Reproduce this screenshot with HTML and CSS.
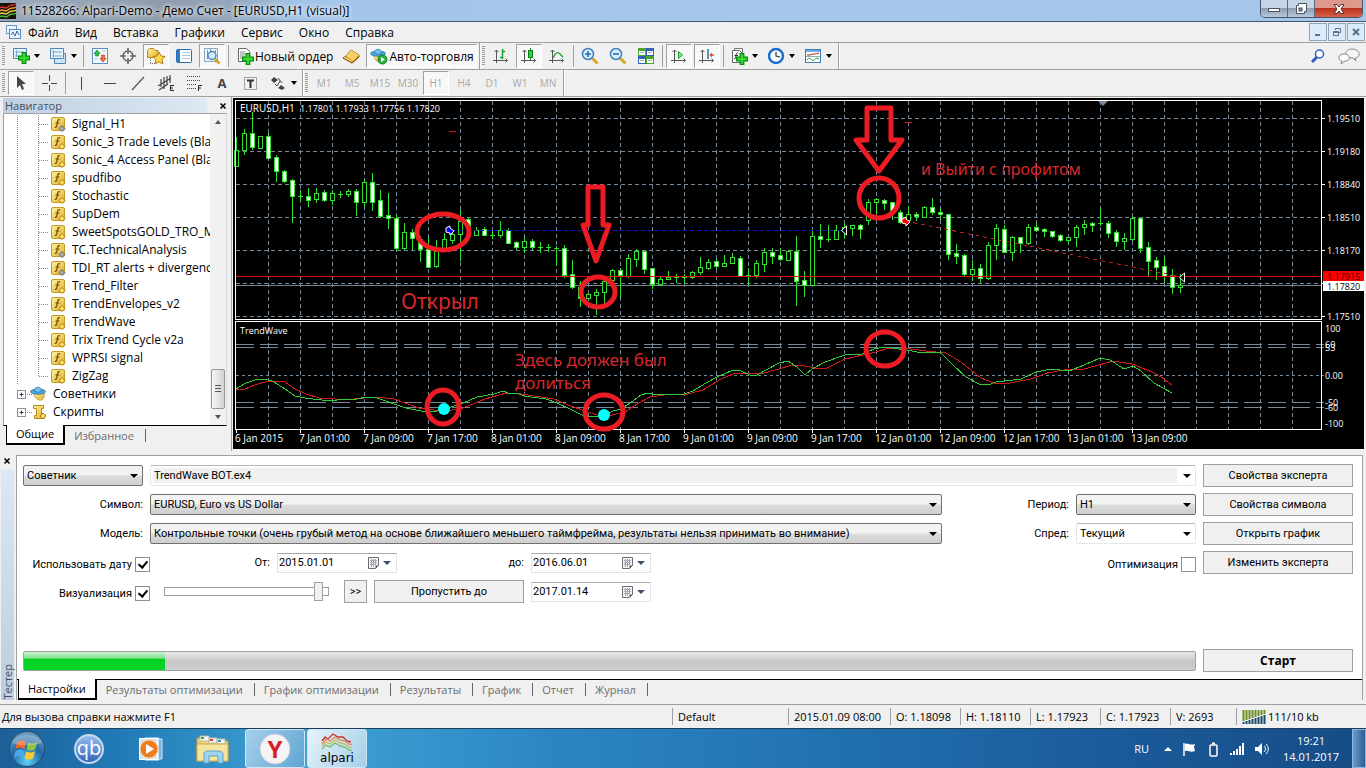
FILE: index.html
```html
<!DOCTYPE html>
<html lang="ru">
<head>
<meta charset="utf-8">
<title>11528266: Alpari-Demo - Демо Счет - [EURUSD,H1 (visual)]</title>
<link rel="stylesheet" href="styles.css">
</head>
<body>
<svg class="defs" width="0" height="0" aria-hidden="true">
  <defs>
    <linearGradient id="gold" x1="0" y1="0" x2="1" y2="1"><stop offset="0" stop-color="#fff3a0"/><stop offset="1" stop-color="#e0ac28"/></linearGradient>
    <linearGradient id="sky" x1="0" y1="0" x2="0" y2="1"><stop offset="0" stop-color="#dff1fc"/><stop offset="1" stop-color="#7fb9e6"/></linearGradient>
    <radialGradient id="orb" cx=".5" cy=".85" r=".9"><stop offset="0" stop-color="#5fd0f5"/><stop offset=".5" stop-color="#1d6aa8"/><stop offset="1" stop-color="#7fa8c4"/></radialGradient>
    <linearGradient id="qbg" x1="0" y1="0" x2="0" y2="1"><stop offset="0" stop-color="#9cc0ee"/><stop offset="1" stop-color="#2f63b8"/></linearGradient>
    <symbol id="fx" viewBox="0 0 16 16"><rect x="1.500" y="1.500" width="13" height="13" rx="1.500" fill="url(#gold)" stroke="#c49a2a"/><path d="M10 4c-2-1-2.300.5-2.600 2.500S6.800 12 4.800 11.200M5.500 7h4" fill="none" stroke="#6b4c08" stroke-width="1.200"/><path d="M12 9.500l3 3-3 3-3-3z" fill="#ffdf5a" stroke="#a97a10"/></symbol>
    <symbol id="fxg" viewBox="0 0 16 16"><rect x="1.500" y="1.500" width="13" height="13" rx="1.500" fill="url(#gold)" stroke="#c49a2a"/><path d="M10 4c-2-1-2.300.5-2.600 2.500S6.800 12 4.800 11.200M5.500 7h4" fill="none" stroke="#6b4c08" stroke-width="1.200"/><path d="M12 9.500l3 3-3 3-3-3z" fill="#aaa" stroke="#666"/></symbol>
    <symbol id="plus" viewBox="0 0 10 10"><path d="M3.500.5h3v3h3v3h-3v3h-3v-3h-3v-3h3z" fill="#35dc2c" stroke="#0a8a12"/></symbol>
    <symbol id="hat" viewBox="0 0 18 18"><path d="M4 8c0 5 3 7 6 8s6-3 5-7z" fill="url(#gold)" stroke="#b58a1c" stroke-width=".7"/><ellipse cx="8.500" cy="7" rx="8" ry="2.800" fill="#4fa9de" stroke="#21719f" stroke-width=".8"/><path d="M4.500 6.500C5 1 12 1 12.500 6.500 10 8 7 8 4.500 6.500z" fill="#6fc1ee" stroke="#21719f" stroke-width=".8"/></symbol>
    <symbol id="axes" viewBox="0 0 18 18"><path d="M4.500 3v13M1 13.500h14M2.500 5l2-2 2 2M13.500 11.500l2 2-2 2" fill="none" stroke="#555"/></symbol>
    <symbol id="cal" viewBox="0 0 14 14"><path d="M1.500 1.500h10v8l-3 3h-7z" fill="#f4f4f4" stroke="#6a6f78"/><path d="M3 4.500h7M3 6.500h7M3 8.500h5M4.500 3v8M6.500 3v8M8.500 3v6" stroke="#a3a8b3"/><path d="M11.500 9.500h-3v3z" fill="#555"/></symbol>
  </defs>
</svg>

<header class="titlebar">
  <svg class="applogo" width="16" height="16"><rect width="16" height="16" fill="#1a1208"/><path d="M0 5c3-3 5 2 8-1s5-1 8-3" fill="none" stroke="#d33" stroke-width="1.500"/><path d="M0 8c3-3 5 2 8-1s5-1 8-3" fill="none" stroke="#e8a030" stroke-width="1.500"/><path d="M0 11c3-3 5 2 8-1s5-1 8-3" fill="none" stroke="#e0d840" stroke-width="1.500"/><path d="M0 14c3-3 5 2 8-1s5-1 8-3" fill="none" stroke="#4b4" stroke-width="1.500"/></svg>
  <h1 class="title">11528266: Alpari-Demo - Демо Счет - [EURUSD,H1 (visual)]</h1>
  <div class="winbtns">
    <button class="wb" aria-label="Свернуть"><svg width="14" height="14"><rect x="1.500" y="6.500" width="11" height="3" fill="#fff" stroke="#4a5360"/></svg></button>
    <button class="wb" aria-label="Развернуть"><svg width="14" height="14"><path d="M4.500 1.500h8v8h-2v2h-8v-8h2z" fill="#fff" stroke="#4a5360"/><rect x="5" y="6" width="3" height="3" fill="#889" stroke="#4a5360"/></svg></button>
    <button class="wb close" aria-label="Закрыть"><svg width="14" height="14"><path d="M2 2.500h3l2 2.500 2-2.500h3L9 7l3 4.500H9L7 9l-2 2.500H2L5 7z" fill="#fff" stroke="#5a2a2a"/></svg></button>
  </div>
</header>

<nav class="menubar">
  <svg width="16" height="16"><rect x="1.500" y="1.500" width="10" height="8" fill="#eaf4fc" stroke="#6a9bc4"/><rect x="4.500" y="5.500" width="11" height="9" fill="#eaf4fc" stroke="#5a8ebc"/><path d="M6 11l2-3 2 4 2-5 2 4" fill="none" stroke="#3a6ea5"/></svg>
  <a href="#">Файл</a><a href="#">Вид</a><a href="#">Вставка</a><a href="#">Графики</a><a href="#">Сервис</a><a href="#">Окно</a><a href="#">Справка</a>
  <div class="mdi">
    <button aria-label="Свернуть окно"><svg width="10" height="10"><path d="M2 8h5" stroke="#5c7488" stroke-width="2"/></svg></button>
    <button aria-label="Восстановить окно"><svg width="10" height="10"><path d="M3.500 3V1.500h5v4H7M1.500 4.500h5v4h-5zM1.500 5.500h5" fill="none" stroke="#5c7488"/></svg></button>
    <button aria-label="Закрыть окно"><svg width="10" height="10"><path d="M2 2l6 6M8 2L2 8" stroke="#5c7488" stroke-width="2"/></svg></button>
  </div>
</nav>

<div class="toolrow">
  <div class="bar">
    <i class="grip"></i>
    <button class="tb drop" aria-label="Новый график"><svg width="18" height="18"><path d="M1.500 1.500h13v10h-13z" fill="#e8f4fd" stroke="#4c86b8"/><path d="M3 5h9M3 9h5M4.500 3v7" stroke="#7aa7cc"/><use href="#plus" x="6" y="5" width="12" height="12"/></svg></button>
    <button class="tb drop" aria-label="Профили"><svg width="18" height="18"><path d="M5.500 6.500h11v10h-11z" fill="#cfe4f5" stroke="#4c86b8"/><path d="M1.500 1.500h13v10h-13z" fill="#e8f4fd" stroke="#4c86b8"/><path d="M3 5h10M3 9h10M4.500 3v7" stroke="#7aa7cc"/></svg></button>
    <i class="sep"></i>
    <button class="tb" aria-label="Обзор рынка"><svg width="18" height="18"><rect x="1.500" y="1.500" width="15" height="15" fill="#f2f9fe" stroke="#5b93c4"/><path d="M6 3l3 3.500H7.500V9h-3V6.500H3z" fill="#2fbf3a" stroke="#0b7d1c" stroke-width=".6"/><path d="M12 15l3-3.500h-1.500V8h-3v3.500H9z" fill="#f2703c" stroke="#a83210" stroke-width=".6"/><path d="M11 4h4M3 12h4" stroke="#b8c8d8"/></svg></button>
    <button class="tb" aria-label="Перекрестие"><svg width="18" height="18"><circle cx="9" cy="9" r="5" fill="none" stroke="#666" stroke-width="1.500"/><path d="M9 1v6M9 11v6M1 9h6M11 9h6" stroke="#666" stroke-width="1.500"/></svg></button>
    <button class="tb on" aria-label="Навигатор"><svg width="20" height="18"><path d="M1.500 3.500l2-2h4l1.500 2h3v7h-10.500z" fill="url(#gold)" stroke="#b58a1c"/><path d="M4.500 11v6M4 16.500h5" stroke="#777" stroke-dasharray="1 1"/><path d="M13 5l2 4 4 .5-3 3 1 4.500-4-2.200L9 17l1-4.500-3-3 4-.5z" fill="#ffdb4a" stroke="#b07c10"/></svg></button>
    <button class="tb" aria-label="Терминал"><svg width="18" height="18"><rect x="1.500" y="2.500" width="15" height="13" rx="1" fill="#fff" stroke="#2a6cb0"/><path d="M2 3h3v12H2z" fill="#2f7acb"/><path d="M7 5.500h8M7 8.500h8M7 11.500h8" stroke="#a8c8e8"/></svg></button>
    <button class="tb on" aria-label="Тестер стратегий"><svg width="18" height="18"><rect x="1.500" y="1.500" width="13" height="13" fill="#eef6fc" stroke="#86a9c6"/><path d="M4.500 3v9M7.500 2v7M12.500 3v9" stroke="#7f95a8"/><circle cx="9" cy="8.500" r="4" fill="#cfe8fa" fill-opacity=".8" stroke="#4a88c0" stroke-width="1.400"/><path d="M12 12l4.500 4.500" stroke="#d8a020" stroke-width="2.500"/></svg></button>
    <i class="sep"></i>
    <button class="tb wide"><svg width="18" height="18"><path d="M2.500 1.500h8l3 3v10h-11z" fill="#fff" stroke="#666"/><path d="M4 5h5M4 7h7M4 9h5M4 11h4" stroke="#888"/><use href="#plus" x="6" y="6" width="12" height="12"/></svg>Новый ордер</button>
    <button class="tb" aria-label="MetaEditor"><svg width="18" height="18"><path d="M1 11l3-2 5-6 8 5v2l-7 6z" fill="#d9981f" stroke="#8a5a0c"/><path d="M4 9l5-6 8 5-6 6z" fill="#f6d06a"/><path d="M1 11l9 5 7-6" fill="none" stroke="#8a5a0c"/><path d="M2 10.500l8 4" stroke="#fff0b0"/></svg></button>
    <button class="tb wide on"><svg width="18" height="18"><use href="#hat" width="17" height="17"/><circle cx="12.500" cy="12.500" r="4.500" fill="#25b03a" stroke="#0b7d1c"/><path d="M11 10l4 2.500-4 2.500z" fill="#fff"/></svg>Авто-торговля</button>
  </div>
  <div class="bar">
    <i class="grip"></i>
    <button class="tb" aria-label="Бары"><svg width="18" height="18"><use href="#axes" width="18" height="18"/><path d="M10.500 2v10M8 10.500h2.500M10.500 4.500H13" fill="none" stroke="#16a32a" stroke-width="1.500"/></svg></button>
    <button class="tb on" aria-label="Японские свечи"><svg width="18" height="18"><use href="#axes" width="18" height="18"/><path d="M10.500 1v12" stroke="#0b7d1c"/><rect x="8.500" y="3.500" width="4" height="7" fill="#2bd13c" stroke="#0b7d1c"/></svg></button>
    <button class="tb" aria-label="Линия"><svg width="18" height="18"><use href="#axes" width="18" height="18"/><path d="M5 11c2-5 5-7 7-4l3 3" fill="none" stroke="#16a32a" stroke-width="1.300"/></svg></button>
    <i class="sep"></i>
    <button class="tb" aria-label="Увеличить"><svg width="18" height="18"><path d="M11 11l5.500 5.500" stroke="#d8a828" stroke-width="3"/><circle cx="7" cy="7" r="5.500" fill="#d8effc" stroke="#3a80c4" stroke-width="1.500"/><path d="M4 7h6M7 4v6" stroke="#2a6cb0" stroke-width="1.600"/></svg></button>
    <button class="tb" aria-label="Уменьшить"><svg width="18" height="18"><path d="M11 11l5.500 5.500" stroke="#d8a828" stroke-width="3"/><circle cx="7" cy="7" r="5.500" fill="#d8effc" stroke="#3a80c4" stroke-width="1.500"/><path d="M4 7h6" stroke="#2a6cb0" stroke-width="1.600"/></svg></button>
    <button class="tb" aria-label="Расположить окна"><svg width="18" height="18"><path d="M1 1h8v8H1zM9 9h8v8H9z" fill="#4aa52a"/><path d="M9 1h8v8H9zM1 9h8v8H1z" fill="#2f62b8"/><path d="M2 4h6v4H2zM10 4h6v4h-6zM2 12h6v4H2zM10 12h6v4h-6z" fill="#fff"/><path d="M3 5.500h4M11 5.500h4M3 13.500h4M11 13.500h4" stroke="#9bb"/></svg></button>
    <i class="sep"></i>
    <button class="tb on" aria-label="Автопрокрутка"><svg width="18" height="18"><use href="#axes" width="18" height="18"/><path d="M8.500 4.500v7l4-3.500z" fill="#8ee08e" stroke="#16a32a"/></svg></button>
    <button class="tb on" aria-label="Сдвиг графика"><svg width="18" height="18"><use href="#axes" width="18" height="18"/><path d="M10 2v10" stroke="#2a6cb0" stroke-width="1.500"/><path d="M12 8h4" stroke="#d8501c" stroke-width="1.500"/><path d="M11.500 8l2.500-2.500v5z" fill="#d8501c"/></svg></button>
    <i class="sep"></i>
    <button class="tb drop" aria-label="Индикаторы"><svg width="18" height="18"><path d="M4.500 1.500h8v11h-8z" fill="#fff" stroke="#777"/><path d="M2.500 3.500h7l2 2v10h-9z" fill="#fff" stroke="#666"/><path d="M8 6C5 5 7 12 4 12M4.500 8.500H8" fill="none" stroke="#333"/><use href="#plus" x="6" y="6" width="12" height="12"/></svg></button>
    <button class="tb drop" aria-label="Периоды"><svg width="18" height="18"><circle cx="9" cy="9" r="7" fill="#f4faff" stroke="#1f6fca" stroke-width="2.500"/><path d="M9 5v4l4 1" fill="none" stroke="#333" stroke-width="1.200"/></svg></button>
    <button class="tb drop" aria-label="Шаблоны"><svg width="18" height="18"><rect x="1.500" y="2.500" width="15" height="13" fill="#fff" stroke="#3a7ab8"/><path d="M2 4h14" stroke="#6fabe0" stroke-width="2"/><path d="M3 8h3l3-1h3l3-1" fill="none" stroke="#a03020"/><path d="M3 13c2-3 3-2 5 0s4-4 7-1" fill="none" stroke="#16a32a"/><path d="M2 9.500h14" stroke="#9ab"/></svg></button>
  </div>
  <div class="toolright">
    <button aria-label="Поиск"><svg width="16" height="16"><path d="M7 9l-5 5" stroke="#2b5fd0" stroke-width="3"/><circle cx="9.500" cy="6" r="4" fill="#fff" stroke="#2b5fd0" stroke-width="1.500"/></svg></button>
    <button aria-label="Сообщения"><svg width="22" height="18"><path d="M14 2c9 0 9 9 3 9l1 3-3-3C5 11 6 2 14 2z" fill="#f4f4f4" stroke="#888"/><path d="M6 7c7 0 7 7 1 7l-4 3 1-3C-1 13 0 7 6 7z" fill="#fafafa" stroke="#888"/></svg></button>
  </div>
</div>

<div class="toolrow">
  <div class="bar">
    <i class="grip"></i>
    <button class="tb on" aria-label="Курсор"><svg width="18" height="18"><path d="M5 2v12l3-3 2 5 2-1-2-5h4z" fill="#444"/></svg></button>
    <button class="tb" aria-label="Перекрестие курсора"><svg width="18" height="18"><path d="M9.500 1v6M9.500 11v6M2 9.500h6M11 9.500h6" stroke="#444"/></svg></button>
    <i class="sep"></i>
    <button class="tb" aria-label="Вертикальная линия"><svg width="18" height="18"><path d="M8.500 3v13" stroke="#444"/></svg></button>
    <button class="tb" aria-label="Горизонтальная линия"><svg width="18" height="18"><path d="M3 9.500h12" stroke="#444"/></svg></button>
    <button class="tb" aria-label="Трендовая линия"><svg width="18" height="18"><path d="M3 16L15 3" stroke="#555" stroke-width="1.200"/></svg></button>
    <button class="tb" aria-label="Канал"><svg width="18" height="18"><path d="M1 12L14 4M2 16l9-6M4 5v8M7 3v12M10 2v9M13 1v8" stroke="#444" stroke-width="1.200"/><path d="M17 11.500h-3.500v5H17M13.500 14H16" fill="none" stroke="#222"/></svg></button>
    <button class="tb" aria-label="Фибоначчи"><svg width="18" height="18"><path d="M2 2.500h14M2 6.500h14M2 10.500h9M2 14.500h9" stroke="#444" stroke-dasharray="1 1"/><path d="M13.500 17v-5.500H17M13.500 14H16" fill="none" stroke="#222"/></svg></button>
    <button class="tb glyph" aria-label="Текст">A</button>
    <button class="tb" aria-label="Метка"><svg width="18" height="18"><rect x="3.500" y="3.500" width="12" height="12" fill="none" stroke="#555" stroke-dasharray="1 1"/><path d="M6 6.500h7M9.500 6.500V14" stroke="#333" stroke-width="2"/></svg></button>
    <button class="tb drop" aria-label="Фигуры"><svg width="18" height="18"><path d="M5 3l4 3-4 3-3-3zM12 11l4 3-3 2-4-2z" fill="#444"/><path d="M6 10l2 2 3-5M9 4l4 5" fill="none" stroke="#444"/></svg></button>
  </div>
  <div class="bar periods">
    <i class="grip"></i>
    <button class="tb">M1</button><button class="tb">M5</button><button class="tb">M15</button><button class="tb">M30</button><button class="tb on">H1</button><button class="tb">H4</button><button class="tb">D1</button><button class="tb">W1</button><button class="tb">MN</button>
  </div>
</div>

<main class="work">
  <aside class="navigator">
    <div class="navhead"><h2>Навигатор</h2><button aria-label="Закрыть навигатор"><svg width="8" height="8"><path d="M1.500 1.500l5 5M6.500 1.500l-5 5" stroke="#000" stroke-width="1.500"/></svg></button></div>
    <div class="navbody">
      <ul class="tree" id="tree"></ul>
      <div class="scroll"><i class="up"></i><i class="thumb"></i><i class="down"></i></div>
    </div>
    <div class="tabs navtabs"><button class="tab active">Общие</button><button class="tab">Избранное</button></div>
  </aside>
  <section class="chart"><svg id="chart" viewBox="232 97 1134 354" role="img" aria-label="EURUSD,H1"></svg></section>
</main>

<section class="tester">
  <div class="side"><button aria-label="Закрыть тестер"><svg width="8" height="8"><path d="M1.500 1.500l5 5M6.500 1.500l-5 5" stroke="#000" stroke-width="1.500"/></svg></button><div class="sidename"><span>Тестер</span></div></div>
  <div class="panel">
    <form class="form">
      <div class="fields">
        <div class="row">
          <span class="sel short"><select aria-label="Тип"><option>Советник</option></select></span>
          <span class="sel flat grow file"><select aria-label="Файл эксперта"><option>TrendWave BOT.ex4</option></select></span>
        </div>
        <div class="row">
          <label class="lab" for="symbol">Символ:</label>
          <span class="sel grow"><select id="symbol"><option>EURUSD, Euro vs US Dollar</option></select></span>
          <label class="lab" for="period">Период:</label>
          <span class="sel short"><select id="period"><option>H1</option></select></span>
        </div>
        <div class="row">
          <label class="lab" for="model">Модель:</label>
          <span class="sel grow"><select id="model"><option>Контрольные точки (очень грубый метод на основе ближайшего меньшего таймфрейма, результаты нельзя принимать во внимание)</option></select></span>
          <label class="lab" for="spread">Спред:</label>
          <span class="sel flat short"><select id="spread"><option>Текущий</option></select></span>
        </div>
        <div class="row">
          <label class="check">Использовать дату<input type="checkbox" checked></label>
          <label class="lab" for="from">От:</label>
          <span class="date"><input id="from" type="text" value="2015.01.01"><svg width="14" height="14"><use href="#cal" width="14" height="14"/></svg><i></i></span>
          <label class="lab" for="to">до:</label>
          <span class="date"><input id="to" type="text" value="2016.06.01"><svg width="14" height="14"><use href="#cal" width="14" height="14"/></svg><i></i></span>
          <label class="check opt">Оптимизация<input type="checkbox"></label>
        </div>
        <div class="row">
          <label class="check">Визуализация<input type="checkbox" checked></label>
          <input class="slider" type="range" min="0" max="32" value="31" aria-label="Скорость визуализации">
          <button type="button" class="btn skip">&gt;&gt;</button>
          <button type="button" class="btn skipto">Пропустить до</button>
          <span class="date"><input type="text" value="2017.01.14" aria-label="Пропустить до даты"><svg width="14" height="14"><use href="#cal" width="14" height="14"/></svg><i></i></span>
        </div>
      </div>
      <div class="actions">
        <button type="button" class="btn">Свойства эксперта</button>
        <button type="button" class="btn">Свойства символа</button>
        <button type="button" class="btn">Открыть график</button>
        <button type="button" class="btn">Изменить эксперта</button>
      </div>
    </form>
    <div class="run">
      <div class="progress" role="progressbar" aria-valuenow="12" aria-label="Ход тестирования"><div class="done" style="width:12%"></div></div>
      <button class="btn start">Старт</button>
    </div>
    <div class="tabs"><button class="tab active">Настройки</button><button class="tab">Результаты оптимизации</button><button class="tab">График оптимизации</button><button class="tab">Результаты</button><button class="tab">График</button><button class="tab">Отчет</button><button class="tab">Журнал</button></div>
  </div>
</section>

<footer class="status">
  <span class="help">Для вызова справки нажмите F1</span>
  <span class="c1">Default</span><span class="c2">2015.01.09 08:00</span><span class="c3">O: 1.18098</span><span class="c3">H: 1.18110</span><span class="c3">L: 1.17923</span><span class="c3">C: 1.17923</span><span class="c4">V: 2693</span>
  <span class="net"><svg width="24" height="14"><path d="M1.500 0v11M4.500 0v10M7.500 0v9M10.500 0v8M13.500 0v7M16.500 0v6M19.500 0v5M22.500 0v4" stroke="#6b8e23" stroke-width="2"/><path d="M1.500 12v2M4.500 11v3M7.500 10v4M10.500 9v5M13.500 8v6M16.500 7v7M19.500 6v8M22.500 5v9" stroke="#164a6e" stroke-width="2"/></svg>111/10 kb</span>
</footer>

<footer class="taskbar">
  <button class="orb" aria-label="Пуск"><svg width="38" height="38"><circle cx="19" cy="19" r="17.500" fill="url(#orb)" stroke="#2a4a66"/><path d="M9 12c3-2 6-2 9 0l-1.500 7c-3-2-6-2-9 0z" fill="#f2682a"/><path d="M20 12.500c3 1.500 6 1.500 9-.5l-1.500 7c-3 2-6 2-9 .5z" fill="#8fc640"/><path d="M7.500 21c3-2 6-2 9 0L15 27.500c-3-2-6-2-9 0z" fill="#4aa8ec"/><path d="M18 21.500c3 1.500 6 1.500 9-.5l-1.500 7c-3 2-6 2-9 .5z" fill="#fcc92e"/><path d="M4 13c5-11 25-11 30 0-9 3-21 3-30 0z" fill="#fff" fill-opacity=".25"/></svg></button>
  <button class="task" aria-label="qBittorrent"><svg width="32" height="32"><circle cx="16" cy="16" r="14" fill="url(#qbg)" stroke="#c4d8f0" stroke-width="2"/><text x="16" y="22" class="qb">qb</text></svg></button>
  <button class="task" aria-label="Проигрыватель"><svg width="32" height="32"><path d="M10 5h14v22H10z" fill="#a9cde8" stroke="#e8f4fc"/><path d="M24 6h3v20h-3" fill="#7fb2d8" stroke="#cfe6f6"/><rect x="4.500" y="5.500" width="18" height="21" fill="#d4e6f4" stroke="#fff"/><circle cx="14" cy="16" r="9" fill="#f07c1c" stroke="#fbd0a0"/><path d="M11 11l8 5-8 5z" fill="#fff"/></svg></button>
  <button class="task" aria-label="Проводник"><svg width="34" height="32"><path d="M1 5h10l2 3h19v20H1z" fill="#ecd27a" stroke="#b99b45"/><path d="M4 3h9v5H4zM13 5h8v5h-8zM21 6h8v5h-8z" fill="#f8f8f0" stroke="#bba"/><path d="M5 4h3v2H5z" fill="#3a3"/><path d="M14 6h3v2h-3z" fill="#d43"/><path d="M22 7h3v2h-3z" fill="#48c"/><path d="M1 11h31v17H1z" fill="#f6e59c" stroke="#c8ac55"/><path d="M8 30V21c0-3 3-3 5-3h9c3 0 5 1 5 3v9h-5v-7h-9v7z" fill="#9fd4ee" stroke="#5aa3c8"/></svg></button>
  <button class="task open" aria-label="Яндекс"><svg width="32" height="32"><circle cx="16" cy="16" r="15" fill="#f4f4f4" stroke="#ccd"/><text x="16" y="25" class="ya">Y</text></svg></button>
  <button class="task open lit"><svg width="34" height="18"><path d="M2 8l3-4 3 2 5-5 5 3 5 0 4 4 4 1" fill="none" stroke="#c33" stroke-width="1.300"/><path d="M2 11l4-5 4 2 5-4 5 3 5 1 4 3 3 1" fill="none" stroke="#d85" stroke-width="1.300"/><path d="M2 13l4-4 4 2 5-4 5 3 5 1 4 3 3 1" fill="none" stroke="#cb5" stroke-width="1.300"/><path d="M2 16l4-4 4 2 5-4 5 3 5 1 4 3 3 1" fill="none" stroke="#7b6" stroke-width="1.300"/></svg><span>alpari</span></button>
  <div class="tray">
    <span class="lang">RU</span>
    <svg width="8" height="6"><path d="M0 5l4-4 4 4z" fill="#fff"/></svg>
    <svg width="16" height="16"><path d="M3 2v13" stroke="#fff" stroke-width="1.500"/><path d="M4 3c3-2 4 2 10 0l-1 3 1 4c-5 2-6-1-10 0z" fill="#fff"/></svg>
    <svg width="14" height="16"><rect x="4" y="4" width="7" height="11" rx="1" fill="#1d4f84" stroke="#fff" stroke-width="1.500"/><path d="M6 2.500h3" stroke="#fff" stroke-width="2"/></svg>
    <svg width="16" height="14"><path d="M2 11v2M5 9v4M8 7v6M11 4v9M14 1v12" stroke="#fff" stroke-width="2"/></svg>
    <svg width="16" height="16"><path d="M1 6h3l4-4v12l-4-4H1z" fill="#fff"/><path d="M10 5c2 2 2 4 0 6M12 3c3 3 3 7 0 10" fill="none" stroke="#fff"/></svg>
  </div>
  <div class="clock"><span>19:21</span><span>14.01.2017</span></div>
  <button class="desk" aria-label="Показать рабочий стол"></button>
</footer>
<script src="chart.js"></script>
</body>
</html>
```
FILE: styles.css
```css
* { box-sizing: border-box; }
body { margin: 0; min-height: 100vh; display: flex; flex-direction: column; background: #f0f0f0; color: #000; font: 11px "Open Sans", "Noto Sans", sans-serif; }
button { font: inherit; color: inherit; border: 0; background: none; padding: 0; margin: 0; }
a { color: inherit; text-decoration: none; }
h1, h2 { margin: 0; font: inherit; }
svg { display: block; flex: none; }
.defs { position: absolute; }

.titlebar { height: 22px; flex: none; display: flex; align-items: center; gap: 5px; border-bottom: 1px solid #44566e; background: linear-gradient(90deg, #9aa9ba 0, #8f9cad 12%, #93a7bd 17%, #a3c5e8 22%, #a7c8ea 60%, #a5c6e8); }
.title { flex: 1; font-size: 12px; white-space: nowrap; text-shadow: 0 0 6px #fff, 0 0 4px #fff; }
.winbtns { display: flex; align-self: flex-start; margin-right: 3px; border: 1px solid #46546a; border-top: 0; border-radius: 0 0 5px 5px; overflow: hidden; }
.wb { width: 27px; height: 17px; display: grid; place-items: center; background: linear-gradient(#c5d5e6 45%, #8f9fb2 50%, #b5c8dc); border-right: 1px solid #5a6a80; }
.wb.close { width: 47px; border: 0; background: linear-gradient(#dd9a8c 45%, #b8321c 50%, #d8604a); }

.menubar { height: 21px; flex: none; display: flex; align-items: center; padding-left: 5px; border-bottom: 1px solid #a0a0a0; font-size: 12px; gap: 16px; }
.menubar > svg { margin-right: -9px; }
.mdi { margin-left: auto; display: flex; gap: 1px; padding-right: 1px; }
.mdi button { width: 18px; height: 18px; display: grid; place-items: center; background: #dcebf9; border: 1px solid #8fa5b9; }

.toolrow { height: 27px; flex: none; display: flex; border-bottom: 1px solid #a0a0a0; }
.bar { display: flex; align-items: center; padding: 0 1px 0 2px; border-right: 1px solid #a0a0a0; box-shadow: 1px 0 #fff; }
.grip { width: 3px; height: 20px; margin-right: 2px; background: repeating-linear-gradient(#9a9a9a 0 1px, #f0f0f0 1px 2px); }
.sep { width: 1px; height: 22px; margin: 0 2px; background: #a0a0a0; }
.tb { width: 26px; height: 24px; margin: 0 1px; display: flex; align-items: center; justify-content: center; border: 1px solid transparent; }
.tb.on { background: #f8f8f8; border-color: #a0a0a0 #fff #fff #a0a0a0; }
.tb.drop { width: 35px; gap: 4px; }
.tb.drop::after { content: ""; border: 3px solid transparent; border-top: 4px solid #000; border-bottom: 0; }
.tb.wide { width: auto; gap: 1px; padding: 0 2px 0 3px; font-size: 12px; white-space: nowrap; }
.tb.glyph { font: bold 13px "Open Sans", sans-serif; color: #444; }
.periods { color: #a8a8a8; font-size: 10px; }
.toolright { margin-left: auto; display: flex; align-items: center; gap: 12px; padding-right: 6px; }

.work { display: flex; flex: none; align-items: stretch; }
.navigator { width: 232px; flex: none; display: flex; flex-direction: column; padding: 1px 4px 5px 3px; border-right: 1px solid #a0a0a0; height: 354px; }
.navhead { height: 15px; display: flex; align-items: center; justify-content: space-between; padding-left: 2px; background: linear-gradient(90deg, #bfd0e2, #dce8f3 90%, #f0f0f0 92%); color: #44505c; }
.navhead h2 { font-size: 11px; line-height: 14px; }
.navbody { flex: 1; min-height: 0; display: flex; background: #fff; border: 1px solid #a0a0a0; border-right-color: #ddd; border-bottom-color: #000; overflow: hidden; }
.tree { flex: 1; min-width: 0; margin: 0; padding: 1px 0 0 13px; list-style: none; font-size: 12px; overflow: hidden; }
.tree li { height: 18px; display: flex; align-items: center; line-height: 18px; white-space: nowrap; }
.tree .name { min-width: 0; overflow: hidden; }
.tree svg { margin-right: 6px; }
.scroll { width: 16px; display: flex; flex-direction: column; align-items: center; background: #f1f1f1; padding: 6px 1px; }
.scroll .up { border: 3px solid transparent; border-bottom: 4px solid #555; border-top: 0; }
.scroll .down { border: 3px solid transparent; border-top: 4px solid #555; border-bottom: 0; margin-top: 6px; }
.scroll .thumb { margin-top: auto; width: 14px; height: 40px; border: 1px solid #979797; border-radius: 2px; background: repeating-linear-gradient(#555 0 1px, transparent 1px 3px) center / 6px 8px no-repeat, linear-gradient(90deg, #f6f6f6, #d2d2d2); }
.chart { flex: 1; min-width: 0; background: #f0f0f0; }
.chart svg { width: 100%; height: auto; }

.tabs { display: flex; height: 20px; font-size: 11px; color: #6d6d6d; border-top: 1px solid #000; }
.tab { position: relative; padding: 0 12px 0 9px; line-height: 18px; white-space: nowrap; }
.tab:not(.active)::after { content: ""; position: absolute; right: 0; top: 3px; height: 13px; border-right: 1px solid #666; }
.tab.active { margin-top: -1px; padding: 0 9px; color: #000; background: #fff; border: solid #000; border-width: 0 2px 2px 1px; height: 20px; }
.navtabs { flex: none; margin-left: 3px; border-top: 0; }

.tester { flex: 1; display: flex; padding: 4px 3px 4px 0; }
.side { width: 16px; flex: none; display: flex; flex-direction: column; padding: 2px 2px 0 1px; }
.side button { padding: 0 0 5px 2px; }
.sidename { flex: 1; display: flex; align-items: flex-end; justify-content: center; background: linear-gradient(#dce8f3, #bccddf); color: #44505c; }
.sidename span { writing-mode: vertical-rl; transform: rotate(180deg); line-height: 13px; }
.panel { flex: 1; min-width: 0; display: flex; flex-direction: column; background: #fff; border: solid #a0a0a0; border-width: 1px 1px 0 1px; }
.form { display: flex; gap: 7px; padding: 8px 9px 0 6px; font-family: Roboto, "Open Sans", sans-serif; }
.fields { flex: 1; min-width: 0; display: flex; flex-direction: column; gap: 6px; }
.row { height: 23px; display: flex; align-items: center; gap: 7px; }
.lab { width: 120px; flex: none; text-align: right; }
.actions { width: 150px; flex: none; display: flex; flex-direction: column; gap: 6px; }
.btn { height: 23px; background: #f0f0f0; border: 1px solid #a0a0a0; }
.sel { position: relative; display: block; height: 21px; min-width: 0; }
.sel select { width: 100%; height: 21px; appearance: none; margin: 0; padding: 0 20px 0 3px; font: inherit; color: inherit; border: 1px solid #707070; border-radius: 2px; background: linear-gradient(#f2f2f2 48%, #dcdcdc 52%, #cfcfcf); }
.sel::after { content: ""; position: absolute; right: 5px; top: 9px; border: 4px solid transparent; border-top: 4px solid #000; border-bottom: 0; pointer-events: none; }
.sel.flat select { background: #fff; border-color: #b8b8b8 #e3e6ea #e3e6ea; }
.sel.file select { background: linear-gradient(#f0f0f0, #f0f0f0) 2px 2px / calc(100% - 20px) 15px no-repeat #fff; }
.short { width: 120px; flex: none; }
.grow { flex: 1; }
.check { width: 127px; flex: none; display: flex; align-items: center; justify-content: flex-end; gap: 3px; padding-top: 4px; }
.check.opt { margin-left: auto; }
.check input { appearance: none; width: 15px; height: 15px; margin: 0; border: 1px solid #909090; background: #fff; }
.check input:checked::before { content: ""; display: block; width: 4px; height: 7px; margin: 1px 0 0 4px; border: solid #000; border-width: 0 2px 2px 0; transform: rotate(40deg); }
.check + .lab { width: 113px; }
.date { width: 120px; height: 20px; flex: none; display: flex; align-items: center; gap: 2px; padding-right: 5px; background: #fff; border: 1px solid #dfe2e6; border-top-color: #a8a8a8; }
.date input { flex: 1; min-width: 0; height: 18px; border: 0; padding: 0 0 0 1px; background: none; font: inherit; }
.date i { border: 4px solid transparent; border-top: 4px solid #3c5068; border-bottom: 0; }
.slider { appearance: none; width: 165px; height: 9px; margin: 0 8px 0 7px; border: 1px solid #a0a0a0; background: #fff; }
.slider::-webkit-slider-thumb { appearance: none; width: 9px; height: 19px; background: #f0f0f0; border: 1px solid #a0a0a0; }
.skip { width: 23px; }
.skipto { width: 150px; }
.run { display: flex; gap: 7px; align-items: center; margin-top: auto; padding: 0 9px 7px 6px; }
.progress { flex: 1; height: 20px; border: 1px solid #a0a0a0; border-radius: 2px; background: linear-gradient(#e8e8e8, #d0d0d0 40%, #c6c6c6 50%, #cfcfcf); }
.done { height: 18px; background: linear-gradient(#c9f3cd, #7fe28c 35%, #06cf26 38%, #05d625); }
.start { width: 150px; font-weight: bold; font-size: 12px; }
.panel .tabs { flex: none; height: 21px; background: #f0f0f0; padding-left: 1px; }
.panel .tab.active { height: 21px; }

.status { height: 24px; flex: none; display: flex; align-items: center; border-top: 1px solid #a0a0a0; background: #f0f0f0; }
.status span { height: 17px; line-height: 17px; padding-left: 5px; border-left: 1px solid #a0a0a0; white-space: nowrap; }
.status .help { flex: 1; padding-left: 2px; border: 0; }
.status .c1 { width: 116px; }
.status .c2 { width: 102px; }
.status .c3 { width: 70px; }
.status .c4 { width: 66px; }
.status .net { width: 130px; display: flex; align-items: center; gap: 2px; }

.taskbar { height: 40px; flex: none; display: flex; align-items: center; border-top: 1px solid #1c3d5c; background: linear-gradient(90deg, #1c5f98 0, #1f78b4 8%, #3fa3d4 22%, #2c86c4 40%, #2272b0 60%, #1b5c9c 80%, #164c86); color: #fff; }
.orb { width: 54px; display: grid; place-items: center; }
.task { width: 60px; height: 39px; margin: 0 1px; display: flex; flex-direction: column; align-items: center; justify-content: center; }
.task.open { border: 1px solid #cfe6f5; border-radius: 3px; background: linear-gradient(120deg, #a6d0ea, #5fa5d2); }
.task.lit { background: linear-gradient(120deg, #e6f3fa, #a4cfe8); color: #000; font: 12px/14px "DejaVu Sans", sans-serif; }
.orb + .task { margin-left: 5px; }
.qb { font: 20px "Open Sans", sans-serif; fill: #fff; text-anchor: middle; }
.ya { font: bold 24px "Open Sans", sans-serif; fill: #d81e2c; text-anchor: middle; }
.tray { margin-left: auto; display: flex; align-items: center; gap: 9px; }
.tray .lang { margin-right: 6px; }
.clock { width: 82px; display: flex; flex-direction: column; align-items: center; line-height: 16px; }
.desk { width: 14px; height: 39px; border: 1px solid #8fb8dc; background: linear-gradient(90deg, #6a9cc8, #2a5f9a); }

.axis { font: 10px "Open Sans", sans-serif; fill: #fff; }
.axis.small { font-size: 9px; }
.axis.ask { fill: #5c0000; }
.axis.bid { fill: #000; }
.note { font-family: "Noto Sans", sans-serif; fill: #d8262c; }
.crisp { shape-rendering: crispEdges; }
.mark { fill: none; stroke: #ed1c24; stroke-width: 5; stroke-linejoin: round; }
```
FILE: chart.js
```js
// [filled, high, top, bottom, low]; one candle per hour, 8px apart
const candles = [
[0,137,150,166,166],[0,129,133,150,154],[1,112,133,147,149],[0,136,136,148,148],[1,133,136,158,158],[1,155,157,171,181],[1,170,171,181,182],[1,179,180,196,222],
[0,190,196,196,200],[1,188,196,200,206],[0,188,193,199,202],[1,190,192,200,201],[0,190,193,200,204],[0,191,194,194,197],[0,189,191,194,196],[1,189,191,202,215],
[0,179,182,202,206],[1,173,182,202,210],[1,190,200,216,217],[1,193,215,218,228],[1,215,218,248,250],[0,223,232,248,249],[1,229,232,238,250],[1,236,239,249,261],
[1,237,249,267,267],[0,240,251,266,267],[0,233,239,248,249],[0,231,234,240,243],[0,210,221,234,260],[1,218,219,226,229],[0,227,230,235,235],[1,227,229,235,235],
[0,231,235,235,238],[0,221,230,235,237],[1,228,230,243,243],[1,241,242,247,249],[0,237,241,247,252],[1,239,241,247,249],[0,242,247,247,252],[0,244,247,247,251],
[0,246,248,248,265],[1,245,248,275,277],[1,260,274,287,288],[1,281,287,298,306],[0,293,294,298,299],[0,289,292,295,314],[0,279,281,292,303],[0,269,270,280,281],
[1,268,270,275,297],[0,254,258,276,277],[0,249,251,259,266],[1,251,251,269,273],[1,268,268,284,288],[0,277,279,284,285],[0,271,277,279,279],[0,274,277,277,282],
[0,274,277,277,283],[0,271,272,277,278],[0,257,267,272,274],[0,259,262,268,269],[1,259,261,266,268],[0,255,263,266,266],[0,253,257,263,263],[1,256,258,276,276],
[0,268,275,275,284],[0,260,263,275,277],[0,248,252,264,271],[1,248,252,256,263],[1,248,255,259,260],[0,250,251,260,260],[1,236,251,281,305],[1,271,280,285,296],
[0,231,236,285,285],[1,224,236,239,247],[0,225,239,239,241],[0,225,230,239,239],[0,223,227,230,238],[0,225,225,228,235],[1,224,225,229,238],[0,199,202,220,224],
[0,198,199,202,213],[1,199,200,203,209],[1,202,202,213,219],[1,210,212,222,223],[0,206,214,220,222],[1,212,214,216,220],[0,206,207,217,217],[1,198,207,212,214],
[1,208,212,214,219],[1,214,214,254,259],[1,244,253,256,263],[1,254,255,274,276],[0,260,269,274,280],[1,264,268,278,282],[0,242,245,278,279],[0,224,228,245,259],
[1,225,229,252,252],[0,236,237,252,260],[1,237,237,243,252],[0,224,227,243,244],[1,223,227,230,231],[1,228,229,231,236],[1,231,231,236,237],[1,234,235,240,241],
[0,237,237,240,243],[0,225,227,237,246],[0,220,224,227,234],[1,222,223,225,231],[0,208,223,223,225],[1,221,223,233,237],[1,230,232,241,246],[0,233,238,241,249],
[0,216,218,239,240],[1,218,218,248,252],[1,242,247,261,275],[1,257,260,267,279],[1,257,266,276,282],[1,269,275,287,293],[0,274,285,287,292]];

const fast = "236,389 246,383 255,380 267,379 274,382 285,389 295,396 305,398 330,401 337,400 343,399 357,399 366,397 374,397 383,400 394,404 406,408 421,411 437,411 448,408 463,403 477,397 494,394 503,391 508,393 517,393 524,396 546,399 557,403 570,409 584,416 599,417 606,415 613,411 621,409 630,403 641,395 648,393 657,395 684,394 693,391 706,383 717,377 733,370 741,371 750,375 757,375 768,369 779,363 788,361 797,367 805,375 812,369 825,362 845,355 862,354 874,349 884,347 907,350 917,352 937,352 941,353 952,364 966,377 979,384 988,385 996,382 1021,379 1036,372 1051,369 1069,371 1084,365 1100,358 1110,360 1124,369 1133,366 1141,371 1154,383 1172,393";
const slow = "236,389 245,389 255,385 268,381 285,382 295,389 306,394 319,398 335,399 354,399 375,397 394,399 405,403 419,408 434,410 452,410 463,408 485,399 506,393 521,394 554,399 568,405 588,412 597,415 612,415 625,412 637,404 650,397 664,395 688,394 703,390 721,379 733,374 764,373 779,369 792,365 801,365 814,368 827,368 845,359 863,355 876,352 889,348 911,349 926,351 946,353 961,362 981,378 994,383 1010,383 1031,379 1047,373 1064,370 1084,369 1099,365 1113,361 1132,364 1152,372 1161,377 1172,385";

const out = [];
const line = (x1, y1, x2, y2, color, dash = "none") =>
  out.push(`<path class="crisp" d="M${x1} ${y1}L${x2} ${y2}" stroke="${color}" stroke-dasharray="${dash}"/>`);
const text = (x, y, s, cls = "axis", attrs = "") => out.push(`<text x="${x}" y="${y}" class="${cls}" ${attrs}>${s}</text>`);
const grid = "#778899";

out.push('<rect x="233" y="98" width="1131" height="351"/>');
for (let x = 268.5; x < 1320; x += 32) {
  line(x, 101, x, 319, grid, "4 3");
  line(x, 322, x, 429, grid, "4 3");
}
["1.19510", "1.19180", "1.18840", "1.18510", "1.18170", "", "1.17510"].forEach((s, i) => {
  const y = 118.5 + 33 * i;
  line(236, y, 1321, y, grid, "4 3");
  line(1322, y, 1325, y, "#fff");
  if (s) text(1327, y + 3.5, s, "axis small");
});
line(236, 285.5, 1321, 285.5, grid);
[344.5, 347.5, 402.5, 407.5].forEach(y => line(236, y, 1324, y, grid, "18 6"));
line(236, 375.5, 1324, 375.5, grid, "3 3");

candles.forEach(([filled, high, top, bottom, low], i) => {
  const x = 236 + 8 * i;
  const g = "#32e032";
  line(x + .5, high, x + .5, low + 1, g);
  if (bottom - top < 1) line(x - 2, top + .5, x + 3, top + .5, g);
  else out.push(`<rect class="crisp" x="${x - 1.5}" y="${top + .5}" width="4" height="${bottom - top}" fill="${filled ? "#fff" : "#000"}" stroke="${g}"/>`);
});
line(236, 276.5, 1321, 276.5, "#e01010");
line(452, 230.5, 846, 230.5, "#1414d8", "4 3");
line(905, 221, 1182, 277, "#c02020", "4 4");
line(449, 131.500, 456, 131.500, "#d01818");
line(905, 122.500, 912, 122.500, "#d01818");
out.push(`<polyline class="crisp" points="${slow}" fill="none" stroke="#d01c1c"/><polyline class="crisp" points="${fast}" fill="none" stroke="#32cd32"/>`);
out.push('<rect class="crisp" x="235.500" y="100.500" width="1086" height="219" fill="none" stroke="#fff"/><rect class="crisp" x="235.500" y="321.500" width="1086" height="108" fill="none" stroke="#fff"/>');
out.push('<path d="M1098 101h10l-5 5z" fill="#778899"/><path d="M846.500 226v9l-5-4.500zM1184.500 273v9l-5-4.500z" fill="#000" stroke="#fff"/><path d="M446 228l4-2v2l4 3-4 4v-2l-4-1z" fill="#00f" stroke="#fff"/><path d="M902 219l4-2v2l4 3-4 4v-2l-4-1z" fill="#f00" stroke="#fff"/>');
out.push('<rect x="1323" y="271" width="41" height="11" fill="#f00"/><rect x="1323" y="281" width="41" height="10" fill="#fff"/>');
text(1327, 280, "1.17915", "axis small ask");
text(1327, 290, "1.17820", "axis small bid");
text(240, 112, "EURUSD,H1");
text(300, 112, "1.17801 1.17933 1.17756 1.17820", "axis small");
text(240, 334, "TrendWave", "axis small");
[["100", 332], ["60", 348], ["53", 351], ["0.00", 379], ["-50", 406], ["-60", 411], ["-100", 427]].forEach(([s, y]) => text(1325, y, s, "axis small"));
["6 Jan 2015", "7 Jan 01:00", "7 Jan 09:00", "7 Jan 17:00", "8 Jan 01:00", "8 Jan 09:00", "8 Jan 17:00", "9 Jan 01:00", "9 Jan 09:00", "9 Jan 17:00", "12 Jan 01:00", "12 Jan 09:00", "12 Jan 17:00", "13 Jan 01:00", "13 Jan 09:00"].forEach((s, i) => {
  line(236.5 + 64 * i, 430, 236.5 + 64 * i, 433, "#fff");
  text(235 + 64 * i, 442, s);
});
out.push('<circle cx="444" cy="409" r="6" fill="#0ff"/><circle cx="604" cy="415" r="6" fill="#0ff"/>');
out.push('<g class="mark"><ellipse cx="443" cy="232" rx="26" ry="18"/><ellipse cx="598" cy="292" rx="17" ry="15"/><circle cx="879" cy="198" r="20"/><ellipse cx="443" cy="407" rx="16" ry="17"/><ellipse cx="604" cy="412" rx="19" ry="17"/><ellipse cx="885" cy="349" rx="19" ry="17"/><path d="M588 187h15v38h6l-13 36-13-36h5zM867 108h24v32h11l-23 31-23-31h11z"/></g>');
text(401, 309, "Открыл", "note", 'font-size="21"');
text(921, 175, "и Выйти с профитом", "note", 'font-size="16"');
text(515, 366, "Здесь должен был", "note", 'font-size="17"');
text(515, 389, "долиться", "note", 'font-size="17"');
document.getElementById("chart").innerHTML = out.join("");

// Navigator tree: [name, icon]
const items = [["Signal_H1", "fxg"], ["Sonic_3 Trade Levels (Blac", "fx"], ["Sonic_4 Access Panel (Blac", "fx"], ["spudfibo", "fx"], ["Stochastic", "fx"], ["SupDem", "fx"], ["SweetSpotsGOLD_TRO_MO", "fx"], ["TC.TechnicalAnalysis", "fxg"], ["TDI_RT alerts + divergence", "fxg"], ["Trend_Filter", "fx"], ["TrendEnvelopes_v2", "fx"], ["TrendWave", "fx"], ["Trix Trend Cycle v2a", "fx"], ["WPRSI signal", "fx"], ["ZigZag", "fx"]];
const dots = 'fill="none" stroke="#888" stroke-dasharray="1 1"';
const box = '<rect x=".5" y="5.500" width="8" height="8" fill="#fff" stroke="#919191"/><path d="M2.500 9.500h4M4.500 7.500v4" stroke="#223a7a"/>';
const rows = items.map(([name, icon], i) =>
  `<li><svg width="49" height="18"><path d="M.5 0v18M21.500 0v${i === 14 ? 10 : 18}M22 9.500h10" ${dots}/><use href="#${icon}" x="33" y="1" width="16" height="16"/></svg><span class="name">${name}</span></li>`);
rows.push(`<li class="group"><svg width="30" height="18">${box}<path d="M10 9.500h5" ${dots}/><use href="#hat" x="13" y="0" width="17" height="17"/></svg><span class="name">Советники</span></li>`);
rows.push(`<li class="group"><svg width="30" height="18">${box}<path d="M10 9.500h5" ${dots}/><path d="M16.500 2.500h10v3h-2v7h3v3h-10v-3h2v-7h-3z" fill="url(#gold)" stroke="#b58a1c"/><path d="M26 10l3 3-3 3-3-3z" fill="#ffdf5a" stroke="#a97a10"/></svg><span class="name">Скрипты</span></li>`);
document.getElementById("tree").innerHTML = rows.join("");
```
